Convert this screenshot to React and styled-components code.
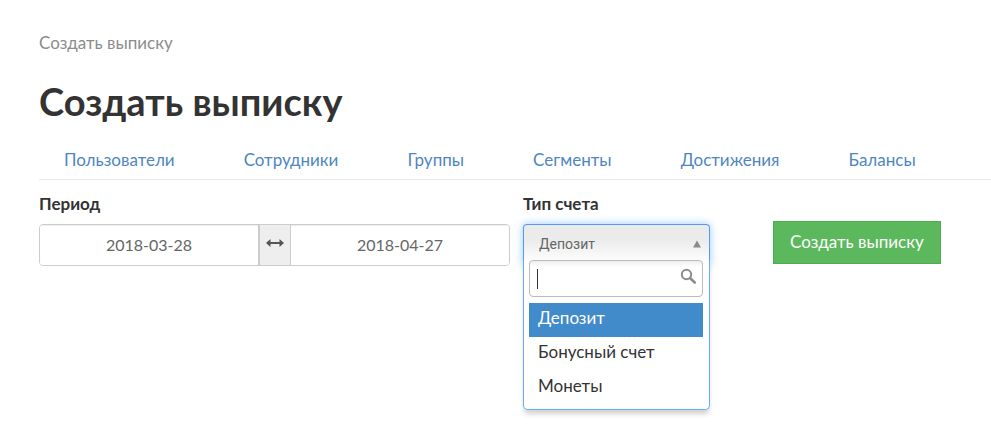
import React, { useState } from "react";
import styled, { createGlobalStyle, css } from "styled-components";

const GlobalStyle = createGlobalStyle`
  *, *::before, *::after { box-sizing: border-box; }
  body {
    margin: 0;
    background: #fff;
    color: #333;
    font-family: Lato, "Open Sans", sans-serif;
    font-size: 17px;
    line-height: 24px;
  }
  button, input { font: inherit; color: inherit; }
`;

const Page = styled.main`
  min-height: 100vh;
  padding: 31px 0 16px 39px;
`;

const Breadcrumb = styled.nav`
  color: #8c8c8c;
`;

const Title = styled.h1`
  margin: 26px 0 0;
  font-size: 38px;
  line-height: 40px;
  font-weight: 700;
`;

const Tabs = styled.nav`
  display: flex;
  gap: 1px;
  margin-top: 18px;
  border-bottom: 1px solid #e7e7e7;
`;

const TabLink = styled.a`
  padding: 9px 34px 7px;
  color: #4f86c0;
  text-decoration: none;
  white-space: nowrap;

  &:first-child { padding-left: 25px; }
`;

const Form = styled.form`
  display: grid;
  grid-template-columns: 471fr 187fr 268fr;
  column-gap: 13px;
  align-items: start;
  margin-top: 12px;
`;

const Field = styled.div`
  min-width: 0;
`;

const Label = styled.label`
  display: block;
  margin-bottom: 8px;
  font-weight: 700;
`;

const DateRange = styled.div`
  display: flex;
  height: 42px;
  border: 1px solid #ccc;
  border-radius: 4px;
  overflow: hidden;
`;

const DateInput = styled.input`
  flex: 1;
  min-width: 0;
  padding: 0 12px;
  border: 0;
  outline: 0;
  background: #fff;
  box-shadow: inset 0 1px 1px rgba(0, 0, 0, 0.075);
  color: #666;
  font-size: 16px;
  text-align: center;
`;

const RangeAddon = styled.span`
  display: flex;
  justify-content: center;
  width: 33px;
  padding-top: 11px;
  border: solid #ccc;
  border-width: 0 1px 0 2px;
  background: #eee;
  color: #555;
`;

const Select = styled.div`
  position: relative;
`;

const SelectButton = styled.button`
  display: flex;
  align-items: center;
  justify-content: space-between;
  width: 100%;
  height: 42px;
  padding: 0 8px 3px 15px;
  border: 1px solid #5897fb;
  border-bottom-color: transparent;
  border-radius: 4px 4px 0 0;
  outline: 0;
  background: linear-gradient(#eaeaea 0%, #ececec 40%, #fff 95%);
  box-shadow: 0 0 8px rgba(82, 168, 236, 0.6);
  color: #666;
  font-family: Roboto, sans-serif;
  font-size: 14px;
`;

const Menu = styled.div`
  position: absolute;
  top: 36px;
  left: 0;
  right: 0;
  padding: 0 6px 4px 5px;
  border: 1px solid #66afe9;
  border-top: 0;
  border-radius: 0 0 5px 5px;
  background: #fff;
  box-shadow: 0 5px 5px -1px rgba(0, 0, 0, 0.18);
`;

const SearchBox = styled.div`
  position: relative;
  height: 37px;
  margin-bottom: 6px;
  border: 1px solid #bbb;
  border-radius: 4px;
  background: linear-gradient(#eee 0, #fff 6px);

  svg {
    position: absolute;
    top: 7px;
    right: 5px;
  }
`;

const SearchInput = styled.input`
  display: block;
  width: 100%;
  height: 100%;
  padding: 0 28px 0 7px;
  border: 0;
  outline: 0;
  background: transparent;
  caret-color: transparent;
`;

const Caret = styled.span`
  position: absolute;
  top: 8px;
  left: 7px;
  width: 1px;
  height: 20px;
  background: #333;
`;

const Options = styled.ul`
  margin: 0;
  padding: 0;
  list-style: none;
`;

const Option = styled.li`
  padding: 3px 8px 7px 9px;
  cursor: pointer;
  white-space: nowrap;

  ${({ $active }) => $active && css`
    background: #428bca;
    color: #fff;
  `}
`;

const SubmitButton = styled.button`
  justify-self: start;
  height: 43px;
  margin: 29px 0 0 50px;
  padding: 0 16px 2px;
  border: 1px solid #4cae4c;
  background: #5cb85c;
  color: #fff;
  white-space: nowrap;
`;

const tabs = ["Пользователи", "Сотрудники", "Группы", "Сегменты", "Достижения", "Балансы"];
const accounts = ["Депозит", "Бонусный счет", "Монеты"];

function RangeIcon() {
  return (
    <svg width="18" height="14" viewBox="0 0 18 14" aria-hidden="true">
      <path d="M0 7 4.5 3v3h9V3L18 7l-4.5 4V8h-9v3z" fill="currentColor" />
    </svg>
  );
}

function SearchIcon() {
  return (
    <svg width="17" height="17" viewBox="0 0 17 17" fill="none" stroke="#8c8c8c" aria-hidden="true">
      <circle cx="6.5" cy="6.5" r="4.7" strokeWidth="2" />
      <path d="m10.5 10.5 4.3 4" strokeWidth="2.6" strokeLinecap="round" />
    </svg>
  );
}

function ArrowUpIcon() {
  return (
    <svg width="8" height="8" viewBox="0 0 8 8" aria-hidden="true">
      <path d="M4 0.5 8 7.5H0z" fill="#8a8a8a" />
    </svg>
  );
}

export default function App() {
  const [from, setFrom] = useState("2018-03-28");
  const [to, setTo] = useState("2018-04-27");
  const [account, setAccount] = useState(accounts[0]);
  const [query, setQuery] = useState("");

  return (
    <>
      <GlobalStyle />
      <Page>
        <Breadcrumb>Создать выписку</Breadcrumb>
        <Title>Создать выписку</Title>
        <Tabs>
          {tabs.map((tab) => (
            <TabLink key={tab} href="#">{tab}</TabLink>
          ))}
        </Tabs>
        <Form onSubmit={(e) => e.preventDefault()}>
          <Field>
            <Label htmlFor="from">Период</Label>
            <DateRange>
              <DateInput id="from" value={from} onChange={(e) => setFrom(e.target.value)} />
              <RangeAddon><RangeIcon /></RangeAddon>
              <DateInput aria-label="Конец периода" value={to} onChange={(e) => setTo(e.target.value)} />
            </DateRange>
          </Field>
          <Field>
            <Label htmlFor="account">Тип счета</Label>
            <Select>
              <SelectButton id="account" type="button" aria-haspopup="listbox" aria-expanded="true">
                {account}
                <ArrowUpIcon />
              </SelectButton>
              <Menu>
                <SearchBox>
                  <SearchInput aria-label="Поиск" value={query} onChange={(e) => setQuery(e.target.value)} />
                  {!query && <Caret />}
                  <SearchIcon />
                </SearchBox>
                <Options role="listbox" aria-label="Тип счета">
                  {accounts
                    .filter((name) => name.toLowerCase().includes(query.toLowerCase()))
                    .map((name) => (
                      <Option
                        key={name}
                        role="option"
                        aria-selected={name === account}
                        $active={name === account}
                        onClick={() => setAccount(name)}
                      >
                        {name}
                      </Option>
                    ))}
                </Options>
              </Menu>
            </Select>
          </Field>
          <SubmitButton type="submit">Создать выписку</SubmitButton>
        </Form>
      </Page>
    </>
  );
}
